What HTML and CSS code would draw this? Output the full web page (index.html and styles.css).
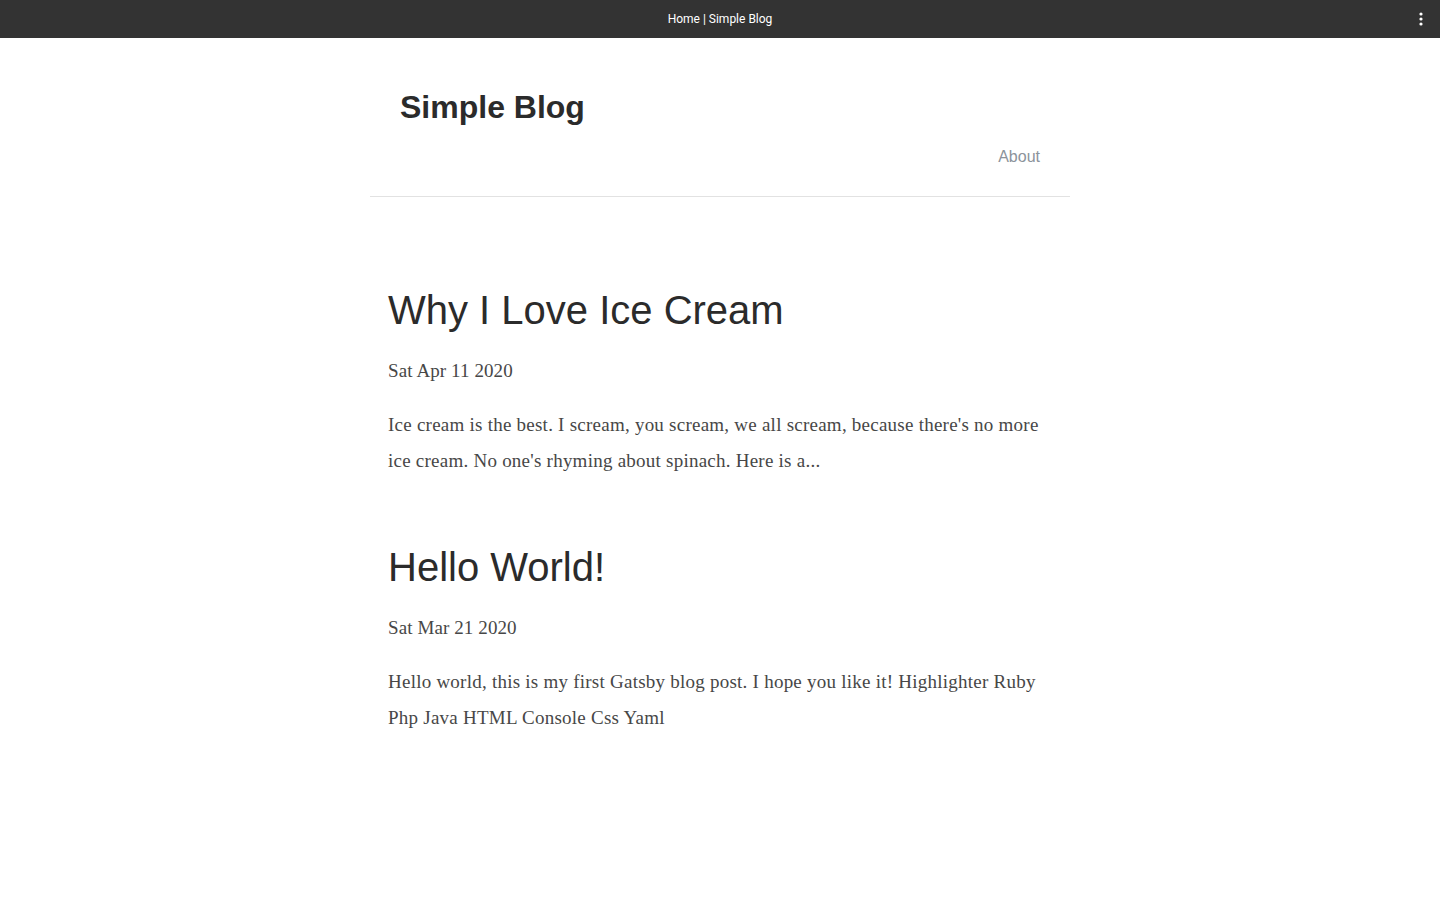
FILE: index.html
```html
<!DOCTYPE html>
<html lang="en">
<head>
<meta charset="utf-8">
<title>Home | Simple Blog</title>
<link rel="stylesheet" href="styles.css">
</head>
<body>
<div class="topbar">
  <span class="tab-title">Home | Simple Blog</span>
  <svg class="kebab" width="4" height="14" viewBox="0 0 4 14"><circle cx="2" cy="2" r="1.6" fill="#fff"/><circle cx="2" cy="7" r="1.6" fill="#fff"/><circle cx="2" cy="12" r="1.6" fill="#fff"/></svg>
</div>
<div class="page">
  <header class="site-header">
    <h1 class="site-title">Simple Blog</h1>
    <nav class="nav"><a href="#" class="nav-link">About</a></nav>
  </header>
  <main class="posts">
    <article class="post">
      <h2 class="post-title">Why I Love Ice Cream</h2>
      <p class="post-date">Sat Apr 11 2020</p>
      <p class="post-excerpt">Ice cream is the best. I scream, you scream, we all scream, because there's no more ice cream. No one's rhyming about spinach. Here is a...</p>
    </article>
    <article class="post">
      <h2 class="post-title">Hello World!</h2>
      <p class="post-date">Sat Mar 21 2020</p>
      <p class="post-excerpt">Hello world, this is my first Gatsby blog post. I hope you like it! Highlighter Ruby Php Java HTML Console Css Yaml</p>
    </article>
  </main>
</div>
</body>
</html>
```
FILE: styles.css
```css
* { box-sizing: border-box; }
html, body { margin: 0; padding: 0; background: #fff; }
body { font-family: "Liberation Serif", Georgia, serif; }

.topbar {
  height: 38px;
  background: #333333;
  display: flex;
  align-items: center;
  justify-content: center;
  position: relative;
}
.tab-title {
  font-family: Roboto, "Liberation Sans", sans-serif;
  font-size: 12px;
  color: #fff;
}
.kebab {
  position: absolute;
  right: 17px;
  top: 12px;
}

.page {
  width: 700px;
  margin: 0 auto;
}
.site-header {
  padding: 50px 30px 27px 30px;
  border-bottom: 1px solid #e2e2e2;
  display: flex;
  flex-direction: column;
}
.site-title {
  margin: 0;
  font-family: "Liberation Sans", Arial, sans-serif;
  font-weight: 700;
  font-size: 32px;
  line-height: 38px;
  color: #2b2b2b;
}
.nav {
  margin-top: 19px;
  display: flex;
  justify-content: flex-end;
}
.nav-link {
  font-family: "Liberation Sans", Arial, sans-serif;
  font-size: 16px;
  line-height: 24px;
  color: #8c939b;
  text-decoration: none;
}

.posts {
  padding: 89px 18px 0 18px;
  display: flex;
  flex-direction: column;
  gap: 64px;
}
.post {
  display: flex;
  flex-direction: column;
  gap: 18px;
}
.post-title {
  margin: 0 0 1px 0;
  font-family: "Liberation Sans", Arial, sans-serif;
  font-weight: 400;
  font-size: 40px;
  line-height: 48px;
  color: #2b2b2b;
}
.post-date, .post-excerpt {
  margin: 0;
  font-size: 19px;
  line-height: 36px;
  color: #474747;
}
.post-date {
  letter-spacing: 0.1px;
}
.post-excerpt {
  letter-spacing: 0.24px;
}
```
